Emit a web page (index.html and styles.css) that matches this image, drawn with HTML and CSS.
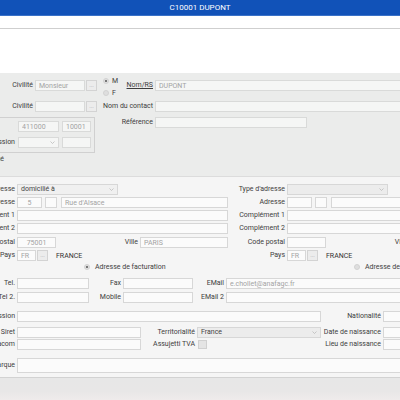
FILE: index.html
```html
<!DOCTYPE html>
<html lang="fr">
<head>
    <meta charset="UTF-8">
    <meta name="viewport" content="width=device-width, initial-scale=1.0">
    <title>C10001 DUPONT</title>
    <link rel="stylesheet" href="styles.css">
</head>
<body>
    <header class="topbar">C10001 DUPONT</header>
    <div class="toolbar"></div>
    <div class="blank"></div>

    <div class="form">
        <!-- Identité -->
        <section class="ident">
            <div class="row">
                <span class="lbl civ-lbl">Civilité</span>
                <input class="field civ-input" value="Monsieur" readonly>
                <span class="btn">...</span>
                <div class="sexe">
                    <label class="opt"><span class="radio on"></span>M</label>
                    <label class="opt"><span class="radio"></span>F</label>
                </div>
                <span class="lbl nom-lbl"><u>Nom/RS</u></span>
                <input class="field grow" value="DUPONT" readonly>
            </div>
            <div class="row row-contact">
                <span class="lbl civ-lbl">Civilité</span>
                <input class="field civ-input" value="" readonly>
                <span class="btn">...</span>
                <span class="lbl contact-lbl">Nom du contact</span>
                <input class="field grow" value="" readonly>
            </div>
            <div class="row-ref">
                <fieldset class="compta">
                    <div class="row">
                        <span class="lbl compta-lbl"></span>
                        <input class="field w41" value="411000" readonly>
                        <input class="field w29 ml3" value="10001" readonly>
                    </div>
                    <div class="row row-gap5">
                        <span class="lbl compta-lbl">Commission</span>
                        <div class="field select w41"><span></span><svg width="5" height="3" viewBox="0 0 5 3"><polyline points="0.5,0.5 2.5,2.5 4.5,0.5" fill="none" stroke="#b5b5b5" stroke-width="0.7"/></svg></div>
                        <input class="field w29 ml3" value="" readonly>
                    </div>
                </fieldset>
                <span class="lbl ref-lbl">Référence</span>
                <input class="field ref-input" value="" readonly>
            </div>
            <div class="blocked">Bloqué</div>
        </section>

        <!-- Adresses et contact -->
        <section class="details">
            <div class="addr-cols">
                <div class="addr-col">
                    <div class="row">
                        <span class="lbl">Type d'adresse</span>
                        <div class="field select w101 dark"><span>domicilié à</span><svg width="5" height="3" viewBox="0 0 5 3"><polyline points="0.5,0.5 2.5,2.5 4.5,0.5" fill="none" stroke="#b5b5b5" stroke-width="0.7"/></svg></div>
                    </div>
                    <div class="row">
                        <span class="lbl">Adresse</span>
                        <input class="field w25 center" value="5" readonly>
                        <input class="field w12 ml3" value="" readonly>
                        <input class="field grow ml4" value="Rue d'Alsace" readonly>
                    </div>
                    <div class="row">
                        <span class="lbl">Complément 1</span>
                        <input class="field grow" value="" readonly>
                    </div>
                    <div class="row row-gap3">
                        <span class="lbl">Complément 2</span>
                        <input class="field grow" value="" readonly>
                    </div>
                    <div class="row">
                        <span class="lbl">Code postal</span>
                        <input class="field w39 center" value="75001" readonly>
                        <span class="lbl ville-lbl">Ville</span>
                        <input class="field w88" value="PARIS" readonly>
                    </div>
                    <div class="row">
                        <span class="lbl">Pays</span>
                        <input class="field w19" value="FR" readonly>
                        <span class="btn">...</span>
                        <span class="pays-nom">FRANCE</span>
                    </div>
                    <label class="fact"><span class="radio on"></span>Adresse de facturation</label>
                </div>
                <div class="addr-col">
                    <div class="row">
                        <span class="lbl">Type d'adresse</span>
                        <div class="field select w101 off"><span></span><svg width="5" height="3" viewBox="0 0 5 3"><polyline points="0.5,0.5 2.5,2.5 4.5,0.5" fill="none" stroke="#b5b5b5" stroke-width="0.7"/></svg></div>
                    </div>
                    <div class="row">
                        <span class="lbl">Adresse</span>
                        <input class="field w25" value="" readonly>
                        <input class="field w12 ml3" value="" readonly>
                        <input class="field grow ml4" value="" readonly>
                    </div>
                    <div class="row">
                        <span class="lbl">Complément 1</span>
                        <input class="field grow" value="" readonly>
                    </div>
                    <div class="row row-gap3">
                        <span class="lbl">Complément 2</span>
                        <input class="field grow" value="" readonly>
                    </div>
                    <div class="row">
                        <span class="lbl">Code postal</span>
                        <input class="field w39" value="" readonly>
                        <span class="lbl ville-lbl">Ville</span>
                        <input class="field w88" value="" readonly>
                    </div>
                    <div class="row">
                        <span class="lbl">Pays</span>
                        <input class="field w19" value="FR" readonly>
                        <span class="btn">...</span>
                        <span class="pays-nom">FRANCE</span>
                    </div>
                    <label class="fact"><span class="radio"></span>Adresse de facturation</label>
                </div>
            </div>

            <div class="contact">
                <div class="row">
                    <span class="lbl">Tel.</span>
                    <input class="field w72" value="" readonly>
                    <span class="lbl fax-lbl">Fax</span>
                    <input class="field w70" value="" readonly>
                    <span class="lbl mail-lbl">EMail</span>
                    <input class="field grow" value="e.chollet@anafagc.fr" readonly>
                </div>
                <div class="row mt3">
                    <span class="lbl">Tel 2.</span>
                    <input class="field w72" value="" readonly>
                    <span class="lbl fax-lbl">Mobile</span>
                    <input class="field w70" value="" readonly>
                    <span class="lbl mail-lbl">EMail 2</span>
                    <input class="field grow" value="" readonly>
                </div>
                <div class="row mt8">
                    <span class="lbl">Profession</span>
                    <input class="field w304" value="" readonly>
                    <span class="lbl naiss-lbl">Nationalité</span>
                    <input class="field grow" value="" readonly>
                </div>
                <div class="row mt5">
                    <span class="lbl">Siret</span>
                    <input class="field w124" value="" readonly>
                    <span class="lbl terr-lbl">Territorialité</span>
                    <div class="field select w124 dark off"><span>France</span><svg width="5" height="3" viewBox="0 0 5 3"><polyline points="0.5,0.5 2.5,2.5 4.5,0.5" fill="none" stroke="#b5b5b5" stroke-width="0.7"/></svg></div>
                    <span class="lbl naiss-lbl">Date de naissance</span>
                    <input class="field grow" value="" readonly>
                </div>
                <div class="row mt1">
                    <span class="lbl">N° Intracom</span>
                    <input class="field w124" value="" readonly>
                    <span class="lbl tva-lbl">Assujetti TVA</span>
                    <span class="check"></span>
                    <span class="tva-space"></span>
                    <span class="lbl naiss-lbl">Lieu de naissance</span>
                    <input class="field grow" value="" readonly>
                </div>
                <div class="row row-note">
                    <span class="lbl">Remarque</span>
                    <textarea class="field grow note" readonly></textarea>
                </div>
            </div>
        </section>
    </div>

    <footer class="footer"></footer>
</body>
</html>
```

FILE: styles.css
```css
* {
    box-sizing: border-box;
}

body {
    margin: 0;
    font-family: Roboto, "Liberation Sans", sans-serif;
    font-size: 7px;
    color: #3d3d3d;
    background: #fff;
    overflow: hidden;
}

.topbar {
    height: 16px;
    background: #1152b8;
    border-bottom: 1px solid #3a72c8;
    color: #fff;
    font-size: 8px;
    line-height: 15px;
    text-align: center;
}

.toolbar {
    height: 13px;
    border-bottom: 1px solid #cfcfcf;
}

.blank {
    height: 44px;
}

/* the form is wider than the window, its left side is scrolled out */
.form {
    margin-left: -80px;
    width: 760px;
}

.row {
    display: flex;
    align-items: center;
    height: 11px;
}

.lbl {
    flex: none;
    padding-right: 2px;
    text-align: right;
    white-space: nowrap;
    line-height: 11px;
}

.field {
    flex: none;
    height: 11px;
    margin: 0;
    padding: 0 3px;
    border: 1px solid #d7d7d7;
    background: #fbfbfb;
    color: #a3a3a3;
    font-family: inherit;
    font-size: 7px;
    line-height: 9px;
    outline: none;
    white-space: nowrap;
}

.grow {
    flex: 1;
    width: 0;
    min-width: 0;
}

.center {
    text-align: center;
}

.select {
    display: flex;
    align-items: center;
    justify-content: space-between;
    background: #f0f0f0;
}

.select.dark {
    color: #454545;
}

.select.off {
    background: #ececec;
}

.btn {
    flex: none;
    width: 11px;
    height: 11px;
    margin-left: 1px;
    border: 1px solid #d3d3d3;
    background: #ececec;
    color: #a0a0a0;
    font-size: 6px;
    line-height: 8px;
    text-align: center;
}

.radio {
    display: inline-block;
    flex: none;
    width: 6px;
    height: 6px;
    border-radius: 50%;
    background: #dedede;
    border: 1px solid #d2d2d2;
    position: relative;
}

.radio.on::after {
    content: "";
    position: absolute;
    left: 1px;
    top: 1px;
    width: 2px;
    height: 2px;
    border-radius: 50%;
    background: #555;
}

.ml3 { margin-left: 3px; }
.ml4 { margin-left: 4px; }
.mt1 { margin-top: 1px; }
.mt3 { margin-top: 3px; }
.mt5 { margin-top: 5px; }
.mt8 { margin-top: 8px; }

.w12 { width: 12px; }
.w19 { width: 19px; }
.w25 { width: 25px; }
.w29 { width: 29px; }
.w39 { width: 39px; }
.w41 { width: 41px; }
.w70 { width: 70px; }
.w72 { width: 72px; }
.w88 { width: 88px; }
.w101 { width: 101px; }
.w124 { width: 124px; }
.w304 { width: 304px; }

/* Identité */
.ident {
    padding: 7px 0 12px;
    background: #ebeceb;
}

.ident .field {
    background: #f5f6f5;
    border-color: #d9dad9;
}

.civ-lbl {
    width: 115px;
}

.civ-input {
    width: 50px;
}

.sexe {
    flex: none;
    align-self: flex-start;
    width: 14px;
    height: 24px;
    margin: -5px 0 0 6px;
}

.opt {
    display: flex;
    align-items: center;
    gap: 3px;
    height: 12px;
    font-size: 7px;
}

.nom-lbl {
    width: 38px;
}

.contact-lbl {
    width: 52px;
    margin-left: 6px;
}

.row-contact {
    margin-top: 10px;
}

.row-ref {
    display: flex;
    align-items: flex-start;
    margin-top: 5px;
}

.compta {
    flex: none;
    width: 175px;
    height: 36px;
    margin: 0;
    padding: 3px 3px 3px 2px;
    border: 1px solid #d0d0d0;
}

.compta-lbl {
    width: 95px;
    padding-right: 3px;
}

.row-gap5 {
    margin-top: 5px;
}

.ref-lbl {
    width: 60px;
    height: 11px;
}

.ref-input {
    width: 152px;
}

.blocked {
    width: 84px;
    margin-top: 1px;
    line-height: 10px;
    text-align: right;
}

/* Adresses et contact */
.details {
    padding: 7px 0 4px 40px;
    border-top: 1px solid #dcdcdc;
    border-bottom: 1px solid #d2d2d2;
    background: #f5f5f5;
}

.addr-cols {
    display: flex;
    gap: 2px;
}

.addr-col {
    flex: none;
    width: 268px;
}

.addr-col .row {
    margin-bottom: 2px;
}

.addr-col .row-gap3 {
    margin-bottom: 3px;
}

.addr-col .lbl,
.contact .lbl {
    width: 57px;
}

.addr-col .ville-lbl {
    flex: 1;
    width: auto;
}

.pays-nom {
    margin-left: 8px;
    color: #333;
}

.fact {
    display: flex;
    align-items: center;
    gap: 5px;
    height: 9px;
    margin-top: -1px;
    padding-left: 124px;
    white-space: nowrap;
}

.contact {
    margin-top: 7px;
}

.contact .fax-lbl {
    width: 34px;
}

.contact .mail-lbl {
    width: 33px;
}

.contact .naiss-lbl {
    width: 62px;
}

.contact .terr-lbl {
    width: 56px;
}

.contact .tva-lbl {
    width: 57px;
    padding-right: 3px;
}

.check {
    flex: none;
    width: 9px;
    height: 9px;
    border: 1px solid #d0d0d0;
    background: #e4e4e4;
}

.tva-space {
    flex: none;
    width: 114px;
}

.row-note {
    height: 15px;
    margin-top: 8px;
}

.note {
    height: 15px;
    resize: none;
}

.footer {
    height: 22px;
    background: linear-gradient(#e7e7e7, #e8e7e7 60%, #efebeb);
}
```
